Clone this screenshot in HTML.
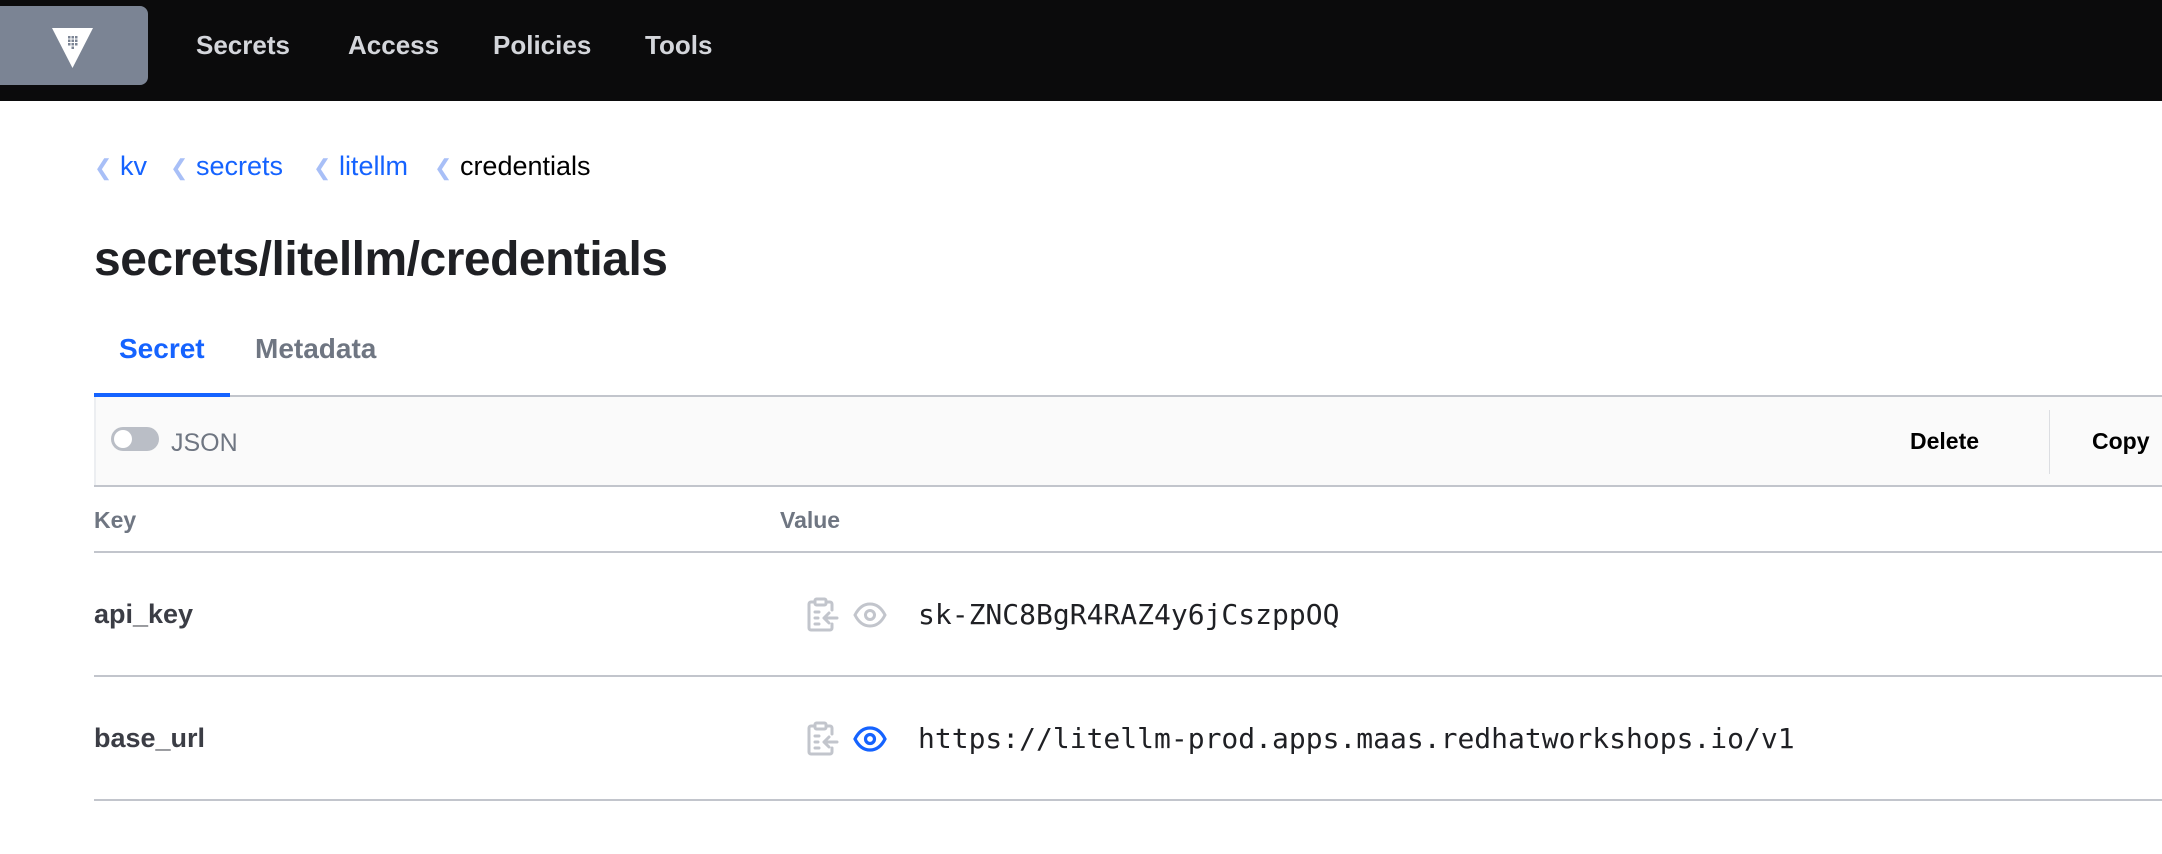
<!DOCTYPE html>
<html><head><meta charset="utf-8">
<style>
*{margin:0;padding:0;box-sizing:border-box}
body{width:2162px;height:854px;overflow:hidden;background:#fff;font-family:"Liberation Sans",Arial,sans-serif;position:relative;color:#1f2024}
.a{position:absolute;white-space:nowrap}
.nav{position:absolute;left:0;top:0;width:2162px;height:101px;background:#0b0b0c}
.logo{position:absolute;left:0;top:6px;width:148px;height:79px;background:#7b8494;border-radius:0 8px 8px 0}
.nl{color:#d4d6db;font-size:26px;font-weight:bold;top:30px}
.bc{font-size:27px;top:151px;color:#1563ff}
.chev{color:#a8bff7;font-size:22px}
.line{position:absolute;left:94px;right:0;height:2px;background:#c2c5cc}
.mono{font-family:"DejaVu Sans Mono","Liberation Mono",monospace;font-size:28px;color:#1f2024}
</style></head><body>
<div class="nav">
  <div class="logo">
    <svg class="a" style="left:52px;top:22px" width="42" height="42" viewBox="0 0 42 42">
      <polygon points="0,0 41,0 20.5,40" fill="#fff"/>
      <g fill="#7b8494">
        <rect x="16" y="8" width="2.5" height="2.5"/><rect x="19.5" y="8" width="2.5" height="2.5"/><rect x="23" y="8" width="2.5" height="2.5"/>
        <rect x="16" y="11.5" width="2.5" height="2.5"/><rect x="19.5" y="11.5" width="2.5" height="2.5"/><rect x="23" y="11.5" width="2.5" height="2.5"/>
        <rect x="16" y="15" width="2.5" height="2.5"/><rect x="19.5" y="15" width="2.5" height="2.5"/><rect x="23" y="15" width="2.5" height="2.5"/>
        <rect x="19.5" y="18.5" width="2.5" height="2.5"/>
      </g>
    </svg>
  </div>
  <div class="a nl" style="left:196px">Secrets</div>
  <div class="a nl" style="left:348px">Access</div>
  <div class="a nl" style="left:493px">Policies</div>
  <div class="a nl" style="left:645px">Tools</div>
</div>

<div class="a bc" style="left:94px"><span class="chev">❮</span> kv</div>
<div class="a bc" style="left:170px"><span class="chev">❮</span> secrets</div>
<div class="a bc" style="left:313px"><span class="chev">❮</span> litellm</div>
<div class="a bc" style="left:434px;color:#000"><span class="chev">❮</span> credentials</div>

<div class="a" style="left:94px;top:232px;font-size:48px;font-weight:bold;color:#1f2024;letter-spacing:-0.5px">secrets/litellm/credentials</div>

<div class="a" style="left:119px;top:333px;font-size:28px;font-weight:bold;color:#1563ff">Secret</div>
<div class="a" style="left:255px;top:333px;font-size:28px;font-weight:bold;color:#6f7682">Metadata</div>
<div class="line" style="top:395px"></div>
<div class="a" style="left:94px;top:393px;width:136px;height:5px;background:#1563ff"></div>

<div class="a" style="left:94px;top:397px;right:0;height:88px;background:#fafafa;border-left:2px solid #eceef1"></div>
<div class="a" style="left:111px;top:427px;width:48px;height:24px;border-radius:12px;background:#babec6"></div>
<div class="a" style="left:114px;top:430px;width:18px;height:18px;border-radius:50%;background:#fff"></div>
<div class="a" style="left:171px;top:429px;font-size:25px;color:#6f7682">JSON</div>
<div class="a" style="left:1910px;top:428px;font-size:23px;font-weight:bold;color:#000">Delete</div>
<div class="a" style="left:2049px;top:410px;width:1px;height:64px;background:#dcdee2"></div>
<div class="a" style="left:2092px;top:428px;font-size:23px;font-weight:bold;color:#000">Copy</div>
<div class="line" style="top:485px"></div>

<div class="a" style="left:94px;top:507px;font-size:23px;font-weight:bold;color:#6f7682">Key</div>
<div class="a" style="left:780px;top:507px;font-size:23px;font-weight:bold;color:#6f7682">Value</div>
<div class="line" style="top:551px"></div>

<div class="a" style="left:94px;top:599px;font-size:27px;font-weight:bold;color:#3b3d45">api_key</div>
<svg class="a" style="left:806px;top:597px" width="34" height="35" viewBox="0 0 34 35" fill="none" stroke="#c2c5cc" stroke-width="3" stroke-linecap="round" stroke-linejoin="round">
  <path d="M8 5H5a2 2 0 0 0-2 2v24a2 2 0 0 0 2 2h19a2 2 0 0 0 2-2v-4M26 13V7a2 2 0 0 0-2-2h-3"/>
  <rect x="9" y="2" width="11" height="6" rx="1.5"/>
  <path d="M9 15h4M9 21h3M9 27h4M31 21H18M23 16l-5 5 5 5"/>
</svg>
<svg class="a" style="left:853px;top:602px" width="34" height="26" viewBox="0 0 34 26" fill="none" stroke="#c2c5cc" stroke-width="3">
  <path d="M2 13C6 5 11 2 17 2s11 3 15 11c-4 8-9 11-15 11S6 21 2 13z"/>
  <circle cx="17" cy="13" r="4.5"/>
</svg>
<div class="a mono" style="left:918px;top:598px">sk-ZNC8BgR4RAZ4y6jCszppOQ</div>
<div class="line" style="top:675px"></div>

<div class="a" style="left:94px;top:723px;font-size:27px;font-weight:bold;color:#3b3d45">base_url</div>
<svg class="a" style="left:806px;top:721px" width="34" height="35" viewBox="0 0 34 35" fill="none" stroke="#c2c5cc" stroke-width="3" stroke-linecap="round" stroke-linejoin="round">
  <path d="M8 5H5a2 2 0 0 0-2 2v24a2 2 0 0 0 2 2h19a2 2 0 0 0 2-2v-4M26 13V7a2 2 0 0 0-2-2h-3"/>
  <rect x="9" y="2" width="11" height="6" rx="1.5"/>
  <path d="M9 15h4M9 21h3M9 27h4M31 21H18M23 16l-5 5 5 5"/>
</svg>
<svg class="a" style="left:853px;top:726px" width="34" height="26" viewBox="0 0 34 26" fill="none" stroke="#1563ff" stroke-width="3.2">
  <path d="M2 13C6 5 11 2 17 2s11 3 15 11c-4 8-9 11-15 11S6 21 2 13z"/>
  <circle cx="17" cy="13" r="4.5"/>
</svg>
<div class="a mono" style="left:918px;top:722px">https://litellm-prod.apps.maas.redhatworkshops.io/v1</div>
<div class="line" style="top:799px"></div>
</body></html>
